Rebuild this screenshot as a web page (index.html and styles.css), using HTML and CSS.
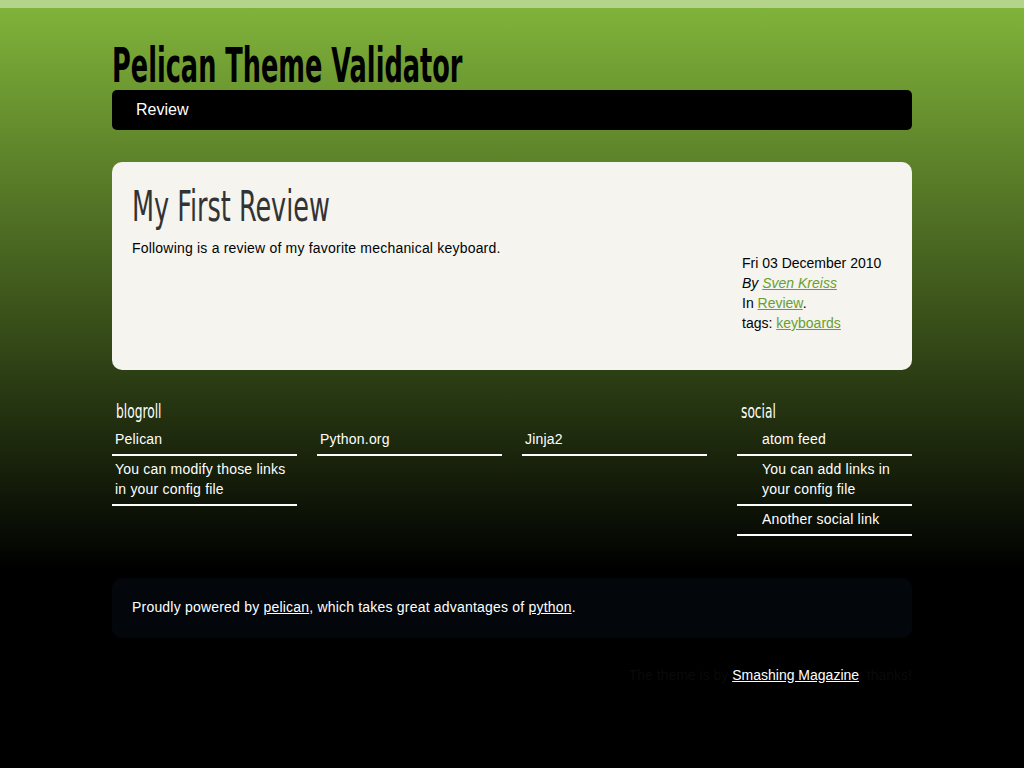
FILE: index.html
```html
<!DOCTYPE html>
<html lang="en">
<head>
<meta charset="utf-8">
<title>Pelican Theme Validator</title>
<link rel="stylesheet" href="styles.css">
</head>
<body>
<header class="banner">
  <h1 class="site-title"><a href="#">Pelican Theme Validator</a></h1>
  <nav class="menu">
    <ul>
      <li><a href="#">Review</a></li>
    </ul>
  </nav>
</header>

<section class="content">
  <article class="article">
    <h1 class="entry-title"><a href="#">My First Review</a></h1>
    <div class="entry">
      <div class="entry-content">
        <p>Following is a review of my favorite mechanical keyboard.</p>
      </div>
      <footer class="post-info">
        <div>Fri 03 December 2010</div>
        <div class="byline">By <a href="#">Sven Kreiss</a></div>
        <div>In <a href="#">Review</a>.</div>
        <div>tags: <a href="#">keyboards</a></div>
      </footer>
    </div>
  </article>
</section>

<section class="extras">
  <div class="blogroll">
    <h2>blogroll</h2>
    <ul>
      <li><a href="#">Pelican</a></li>
      <li><a href="#">Python.org</a></li>
      <li><a href="#">Jinja2</a></li>
      <li><a href="#">You can modify those links in your config file</a></li>
    </ul>
  </div>
  <div class="social">
    <h2>social</h2>
    <ul>
      <li><a href="#">atom feed</a></li>
      <li><a href="#">You can add links in your config file</a></li>
      <li><a href="#">Another social link</a></li>
    </ul>
  </div>
</section>

<footer class="contentinfo">
  <address>Proudly powered by <a href="#">pelican</a>, which takes great advantages of <a href="#">python</a>.</address>
</footer>
<p class="credits">The theme is by <a href="#">Smashing Magazine</a>, thanks!</p>
</body>
</html>
```

FILE: styles.css
```css
html {
  background: #000;
}
body {
  margin: 0;
  min-height: 760px;
  border-top: 8px solid #b4d48c;
  background: linear-gradient(to bottom, #80b33a 0px, #000 562px, #000 100%);
  font-family: "Liberation Sans", Arial, sans-serif;
  font-size: 14px;
  line-height: 20px;
  letter-spacing: 0.2px;
  color: #000305;
}
a {
  color: inherit;
}
ul {
  list-style: none;
  margin: 0;
  padding: 0;
}

.banner {
  width: 800px;
  margin: 0 auto;
  padding-top: 32px;
}
.site-title {
  margin: 0;
  height: 50px;
  font-family: "DejaVu Sans Condensed", "DejaVu Sans", sans-serif;
  font-weight: bold;
  font-size: 48px;
  line-height: 50px;
  letter-spacing: 0;
  white-space: nowrap;
}
.site-title a {
  display: inline-block;
  color: #000;
  text-decoration: none;
  transform: scaleX(0.593);
  transform-origin: left center;
}
.menu {
  background: #000;
  border-radius: 5px;
  height: 40px;
}
.menu a {
  display: block;
  padding: 0 24px;
  line-height: 40px;
  font-size: 16px;
  letter-spacing: 0;
  color: #fff;
  text-decoration: none;
}

.content {
  width: 800px;
  margin: 32px auto 0;
}
.article {
  background: #f5f4ef;
  border-radius: 10px;
  padding: 20px 20px 37px 20px;
}
.entry-title {
  margin: 0;
  font-family: "DejaVu Sans Condensed", "DejaVu Sans", sans-serif;
  font-weight: normal;
  font-size: 42px;
  line-height: 50px;
  letter-spacing: 0;
  white-space: nowrap;
}
.entry-title a {
  display: inline-block;
  color: #333;
  text-decoration: none;
  transform: scaleX(0.676);
  transform-origin: left center;
}
.entry {
  display: flex;
  justify-content: space-between;
  margin-top: 6px;
}
.entry-content p {
  margin: 0;
}
.post-info {
  width: 150px;
  margin-top: 15px;
  letter-spacing: 0;
}
.post-info a {
  color: #6b9e2e;
}
.byline {
  font-style: italic;
}

.extras {
  width: 800px;
  margin: 31px auto 0;
  display: flex;
  gap: 30px;
  color: #fff;
}
.extras h2 {
  margin: 0 0 5px 4px;
  font-family: "DejaVu Sans Condensed", "DejaVu Sans", sans-serif;
  font-weight: normal;
  font-size: 20px;
  line-height: 20px;
  letter-spacing: 0;
  color: #fff;
  transform: scaleX(0.68);
  transform-origin: left center;
}
.extras a {
  color: #fff;
  text-decoration: none;
}
.blogroll {
  width: 595px;
}
.blogroll ul {
  display: grid;
  grid-template-columns: repeat(3, 185px);
  column-gap: 20px;
  align-items: start;
}
.blogroll li {
  padding: 3px 3px 5px;
  border-bottom: 2px solid #fff;
}
.social {
  width: 175px;
}
.social li {
  padding: 3px 10px 5px 25px;
  border-bottom: 2px solid #fff;
}

.contentinfo {
  width: 760px;
  margin: 42px auto 0;
  padding: 19px 20px 21px;
  background: #03070b;
  border-radius: 10px;
  color: #fff;
}
.contentinfo address {
  font-style: normal;
}
.credits {
  width: 800px;
  margin: 27px auto 0;
  text-align: right;
  letter-spacing: 0;
  color: #0a0a0a;
}
.credits a {
  color: #fff;
}
```
